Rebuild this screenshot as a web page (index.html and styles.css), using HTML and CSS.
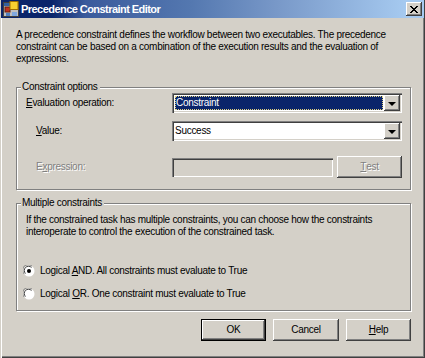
FILE: index.html
```html
<!DOCTYPE html>
<html>
<head>
<meta charset="utf-8">
<link rel="stylesheet" href="styles.css">
</head>
<body>
<div class="window">
  <div class="titlebar">
    <svg class="appicon" width="16" height="16" viewBox="0 0 16 16">
      <rect x="0.5" y="1.5" width="15" height="14" fill="#c0c0c0" stroke="#404040"/>
      <rect x="1" y="2" width="14" height="3" fill="#3060a0"/>
      <rect x="2" y="6" width="5" height="5" fill="#c03020" stroke="#602010" stroke-width="1"/>
      <rect x="7" y="0.5" width="8" height="8" fill="#f8d030" stroke="#a07000"/>
      <rect x="3" y="12" width="4" height="3" fill="#5080c0"/>
      <rect x="9" y="11" width="5" height="4" fill="#80a8e0"/>
    </svg>
    <span class="title">Precedence Constraint Editor</span>
    <div class="closebtn">
      <svg width="8" height="7" viewBox="0 0 8 7"><path d="M0 0 L7 7 M1 0 L8 7 M7 0 L0 7 M8 0 L1 7" stroke="#000" stroke-width="1"/></svg>
    </div>
  </div>

  <div class="desc">A precedence constraint defines the workflow between two executables. The precedence<br>constraint can be based on a combination of the execution results and the evaluation of<br>expressions.</div>

  <div class="group group-options">
    <div class="legend">Constraint options</div>
    <div class="options">
      <div class="row row-eval">
        <div class="label"><u>E</u>valuation operation:</div>
        <div class="combo">
          <div class="combo-field"><span class="combo-selected">Constraint</span></div>
          <div class="combo-btn"><span class="arrow"></span></div>
        </div>
      </div>
      <div class="row row-value">
        <div class="label indent"><u>V</u>alue:</div>
        <div class="combo">
          <div class="combo-field"><span class="combo-text">Success</span></div>
          <div class="combo-btn"><span class="arrow"></span></div>
        </div>
      </div>
      <div class="row row-expr">
        <div class="label indent disabled">E<u>x</u>pression:</div>
        <div class="expr-row">
          <div class="textbox"></div>
          <div class="button test disabled"><u>T</u>est</div>
        </div>
      </div>
    </div>
  </div>

  <div class="group group-multi">
    <div class="legend">Multiple constraints</div>
    <div class="multi-text">If the constrained task has multiple constraints, you can choose how the constraints<br>interoperate to control the execution of the constrained task.</div>
    <div class="radios">
      <div class="radio-row">
        <svg class="radio" width="12" height="12" viewBox="0 0 12 12">
          <circle cx="6" cy="6" r="5.5" fill="#fff"/>
          <path d="M2.5 8.5 A4.2 4.2 0 0 1 8.5 2.5" fill="none" stroke="#404040"/>
          <path d="M1.2 9 A5.5 5.5 0 0 1 9 1.2" fill="none" stroke="#808080"/>
          <circle cx="6" cy="6" r="2" fill="#000"/>
        </svg>
        <span>Logical <u>A</u>ND. All constraints must evaluate to True</span>
      </div>
      <div class="radio-row">
        <svg class="radio" width="12" height="12" viewBox="0 0 12 12">
          <circle cx="6" cy="6" r="5.5" fill="#fff"/>
          <path d="M2.5 8.5 A4.2 4.2 0 0 1 8.5 2.5" fill="none" stroke="#404040"/>
          <path d="M1.2 9 A5.5 5.5 0 0 1 9 1.2" fill="none" stroke="#808080"/>
        </svg>
        <span>Logical <u>O</u>R. One constraint must evaluate to True</span>
      </div>
    </div>
  </div>

  <div class="buttons">
    <div class="button default">OK</div>
    <div class="button">Cancel</div>
    <div class="button"><u>H</u>elp</div>
  </div>
</div>
</body>
</html>
```

FILE: styles.css
```css
html, body {
  margin: 0;
  padding: 0;
  background: #d4d0c8;
}
body {
  font-family: "Liberation Sans", Arial, sans-serif;
  font-size: 10px;
  letter-spacing: -0.28px;
  color: #000;
}
u { text-decoration: underline; text-underline-offset: 1px; }

.window {
  width: 425px;
  height: 358px;
  box-sizing: border-box;
  background: #d4d0c8;
  padding: 0 2px 2px 2px;
  box-shadow: inset 1px 0 0 #d4d0c8, inset 2px 0 0 #fff, inset -1px -1px 0 #404040, inset -2px -2px 0 #808080;
  display: flex;
  flex-direction: column;
}

.titlebar {
  height: 18px;
  margin: 0 -1px 0 -1px;
  background: linear-gradient(to right, #0a246a 0%, #0a246a 12%, #3a5a9c 20%, #5478b0 45%, #7898c8 65%, #a6caf0 96%);
  display: flex;
  align-items: center;
  padding-left: 2px;
}
.appicon { flex: none; }
.title {
  color: #fff;
  font-weight: bold;
  font-size: 11px;
  margin-left: 2px;
  letter-spacing: -0.55px;
}
.closebtn {
  margin-left: auto;
  margin-right: 2px;
  width: 16px;
  height: 14px;
  box-sizing: border-box;
  background: #d4d0c8;
  box-shadow: inset -1px -1px 0 #404040, inset 1px 1px 0 #fff, inset -2px -2px 0 #808080;
  display: flex;
  align-items: center;
  justify-content: center;
}

.desc {
  margin: 11px 0 0 14px;
  line-height: 12px;
  white-space: nowrap;
}

.group {
  width: 395px;
  box-sizing: border-box;
  margin-left: 14px;
  border: 1px solid #808080;
  box-shadow: inset 1px 1px 0 #fff, 1px 1px 0 #fff;
}
.legend {
  width: fit-content;
  background: #d4d0c8;
  line-height: 12px;
  margin: -7px 0 0 4px;
  padding: 0 2px 0 1px;
}
.group-options { margin-top: 22px; }
.options {
  display: flex;
  flex-direction: column;
  padding: 0 7px 11px 9px;
}
.row {
  display: flex;
  align-items: center;
}
.row-value { margin-top: 8px; }
.row-expr { margin-top: 15px; height: 22px; }
.label {
  width: 146px;
  flex: none;
  line-height: 12px;
}
.indent { padding-left: 10px; box-sizing: border-box; }
.disabled { color: #808080; text-shadow: 1px 1px 0 #fff; }

.combo {
  width: 230px;
  height: 20px;
  box-sizing: border-box;
  background: #fff;
  box-shadow: inset 1px 1px 0 #808080, inset 2px 2px 0 #404040, inset -1px -1px 0 #fff, inset -2px -2px 0 #d4d0c8;
  display: flex;
  padding: 2px;
}
.combo-field {
  flex: 1;
  display: flex;
  align-items: center;
  padding: 1px;
}
.combo-selected {
  flex: 1;
  align-self: stretch;
  background: #0a246a;
  color: #fff;
  outline: 1px dotted #e0d080;
  outline-offset: -1px;
  line-height: 14px;
  padding-left: 1px;
}
.combo-text { line-height: 14px; }
.combo-btn {
  width: 16px;
  height: 16px;
  box-sizing: border-box;
  background: #d4d0c8;
  box-shadow: inset -1px -1px 0 #404040, inset 1px 1px 0 #fff, inset -2px -2px 0 #808080;
  display: flex;
  align-items: center;
  justify-content: center;
}
.arrow {
  width: 0;
  height: 0;
  border-left: 4px solid transparent;
  border-right: 4px solid transparent;
  border-top: 4px solid #000;
  margin-top: 1px;
}

.expr-row {
  display: flex;
  align-items: center;
  gap: 4px;
}
.textbox {
  width: 161px;
  height: 19px;
  box-sizing: border-box;
  background: #d4d0c8;
  box-shadow: inset 1px 1px 0 #808080, inset 2px 2px 0 #404040, inset -1px -1px 0 #fff, inset -2px -2px 0 #d4d0c8;
}

.button {
  width: 65px;
  height: 22px;
  box-sizing: border-box;
  background: #d4d0c8;
  box-shadow: inset -1px -1px 0 #404040, inset 1px 1px 0 #fff, inset -2px -2px 0 #808080;
  display: flex;
  align-items: center;
  justify-content: center;
  line-height: 12px;
}
.button.default {
  border: 1px solid #000;
}

.group-multi {
  margin-top: 13px;
  padding: 0 0 8px 0;
}
.multi-text {
  margin: 5px 0 0 9px;
  line-height: 12px;
  white-space: nowrap;
}
.radios {
  margin-top: 25px;
  padding-left: 6px;
  display: flex;
  flex-direction: column;
  gap: 7px;
}
.radio-row {
  height: 16px;
  display: flex;
  align-items: center;
  gap: 5px;
  line-height: 12px;
}
.radio { flex: none; }

.buttons {
  margin-top: 8px;
  display: flex;
  gap: 7px;
  width: 409px;
  justify-content: flex-end;
}
.buttons .button:nth-child(2) { width: 66px; }
```
